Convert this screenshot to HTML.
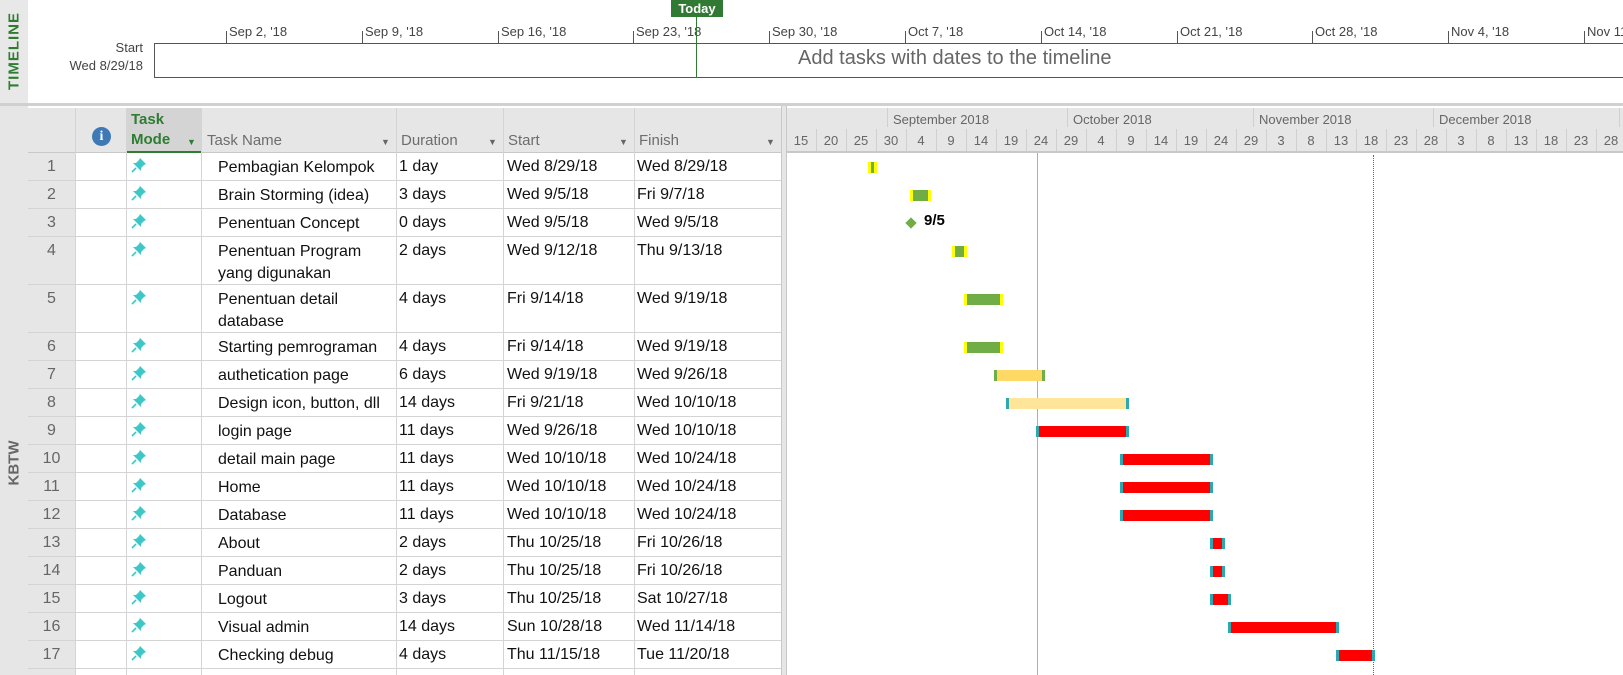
<!DOCTYPE html>
<html style="width:1623px;height:675px;overflow:hidden"><head><meta charset="utf-8"><style>
*{margin:0;padding:0;box-sizing:border-box}
body{width:1623px;height:675px;overflow:hidden;background:#fff;font-family:"Liberation Sans",sans-serif;position:relative}
.a{position:absolute}
.t{position:absolute;white-space:nowrap}
.cell{position:absolute;font-size:16px;color:#111;white-space:nowrap}
</style></head><body>
<!-- timeline -->
<div class="a" style="left:0;top:0;width:28px;height:104px;background:#e8e8e8"></div>
<div class="t" style="left:14px;top:51px;transform:translate(-50%,-50%) rotate(-90deg);color:#2e7d32;font-weight:bold;font-size:15px;letter-spacing:1px">TIMELINE</div>
<div class="t" style="right:1480px;top:40px;font-size:13px;color:#444">Start</div>
<div class="t" style="right:1480px;top:58px;font-size:13px;color:#444">Wed 8/29/18</div>
<div class="a" style="left:154px;top:43px;width:1480px;height:35px;border:1px solid #555"></div>
<div class="t" style="left:798px;top:47px;font-size:20px;color:#666">Add tasks with dates to the timeline</div>
<div id="tl"></div>
<div class="a" style="left:696px;top:17px;width:1px;height:61px;background:#317a34"></div>
<div class="a" style="left:671px;top:0;width:52px;height:17px;background:#317a34;color:#fff;font-weight:bold;font-size:13px;text-align:center;line-height:17px">Today</div>
<div class="a" style="left:0;top:103px;width:1623px;height:3px;background:#d0d0d0"></div>
<!-- left strip -->
<div class="a" style="left:0;top:106px;width:28px;height:569px;background:#e6e6e6"></div>
<div class="t" style="left:14px;top:463px;transform:translate(-50%,-50%) rotate(-90deg);color:#666;font-weight:bold;font-size:15px">KBTW</div>
<div id="wrap" class="a" style="left:0;top:0;width:1623px;height:675px;overflow:hidden">
<!-- table header -->
<div class="a" style="left:28px;top:108px;width:753px;height:45px;background:#e6e6e6;border-bottom:1px solid #c8c8c8"></div>
<div class="a" style="left:126px;top:108px;width:75px;height:45px;background:#d4d4d4;border-bottom:2px solid #2e7d32"></div>
<div class="t" style="left:131px;top:110px;font-size:15px;line-height:20px;color:#2e7d32;font-weight:bold">Task<br>Mode</div>
<div class="t" style="left:187px;top:137px;font-size:9px;color:#2e7d32">▼</div>
<div class="a" style="left:92px;top:127px;width:19px;height:19px;border-radius:50%;background:#3e79b5;color:#fff;font-weight:bold;font-size:14px;text-align:center;line-height:19px;font-family:'Liberation Serif',serif">i</div>
<div class="t" style="left:207px;top:132px;font-size:15px;color:#6d6d6d">Task Name</div>
<div class="t" style="left:401px;top:132px;font-size:15px;color:#6d6d6d">Duration</div>
<div class="t" style="left:508px;top:132px;font-size:15px;color:#6d6d6d">Start</div>
<div class="t" style="left:639px;top:132px;font-size:15px;color:#6d6d6d">Finish</div>
<div class="t" style="left:381px;top:137px;font-size:9px;color:#666">▼</div>
<div class="t" style="left:488px;top:137px;font-size:9px;color:#666">▼</div>
<div class="t" style="left:619px;top:137px;font-size:9px;color:#666">▼</div>
<div class="t" style="left:766px;top:137px;font-size:9px;color:#666">▼</div>
<div id="rows"></div>
<!-- divider -->
<div class="a" style="left:781px;top:106px;width:6px;height:569px;background:#e6e6e6;border-left:1px solid #c8c8c8;border-right:1px solid #c8c8c8"></div>
<!-- gantt header -->
<div class="a" style="left:787px;top:108px;width:836px;height:45px;background:#e6e6e6;border-bottom:2px solid #c8c8c8"></div>
<div id="gh"></div>
<div class="a" style="left:1037px;top:153px;width:1px;height:522px;background:#9ac089"></div>
<div class="a" style="left:1373px;top:155px;width:0;height:520px;border-left:1px dotted #666"></div>
<div id="bars"></div>
</div>
<script>
function h(id,s){document.getElementById(id).innerHTML=s}
var tl='',lab=["Sep 2, '18","Sep 9, '18","Sep 16, '18","Sep 23, '18","Sep 30, '18","Oct 7, '18","Oct 14, '18","Oct 21, '18","Oct 28, '18","Nov 4, '18","Nov 11, '18"];
lab.forEach(function(l,i){var x=Math.round(226+135.8*i);tl+='<div class="a" style="left:'+x+'px;top:31px;width:1px;height:12px;background:#555"></div><div class="t" style="left:'+(x+3)+'px;top:24px;font-size:13px;color:#444">'+l+'</div>'});
h('tl',tl);
var R=[["Pembagian Kelompok","1 day","Wed 8/29/18","Wed 8/29/18"],["Brain Storming (idea)","3 days","Wed 9/5/18","Fri 9/7/18"],["Penentuan Concept","0 days","Wed 9/5/18","Wed 9/5/18"],["Penentuan Program<br>yang digunakan","2 days","Wed 9/12/18","Thu 9/13/18"],["Penentuan detail<br>database","4 days","Fri 9/14/18","Wed 9/19/18"],["Starting pemrograman","4 days","Fri 9/14/18","Wed 9/19/18"],["authetication page","6 days","Wed 9/19/18","Wed 9/26/18"],["Design icon, button, dll","14 days","Fri 9/21/18","Wed 10/10/18"],["login page","11 days","Wed 9/26/18","Wed 10/10/18"],["detail main page","11 days","Wed 10/10/18","Wed 10/24/18"],["Home","11 days","Wed 10/10/18","Wed 10/24/18"],["Database","11 days","Wed 10/10/18","Wed 10/24/18"],["About","2 days","Thu 10/25/18","Fri 10/26/18"],["Panduan","2 days","Thu 10/25/18","Fri 10/26/18"],["Logout","3 days","Thu 10/25/18","Sat 10/27/18"],["Visual admin","14 days","Sun 10/28/18","Wed 11/14/18"],["Checking debug","4 days","Thu 11/15/18","Tue 11/20/18"],["","","",""]];
var pin='<svg width="16" height="16" viewBox="0 0 16 16"><path d="M9 1 L15 7 L13 8 L10 11 L10 14 L2 6 L5 6 L8 3 Z" fill="#3cc8c8"/><path d="M5 11 L1 15" stroke="#3cc8c8" stroke-width="1.6"/></svg>';
var s='',y=153,tops=[];
R.forEach(function(r,i){var hh=(i==3||i==4)?48:28;tops.push(y);
s+='<div class="a" style="left:28px;top:'+y+'px;width:48px;height:'+hh+'px;background:#e6e6e6;border-bottom:1px solid #d4d4d4"></div>';
s+='<div class="a" style="left:75px;top:'+y+'px;width:706px;height:'+hh+'px;border-bottom:1px solid #d4d4d4"></div>';
if(i<17){s+='<div class="cell" style="left:28px;width:47px;text-align:center;top:'+(y+5)+'px;color:#666">'+(i+1)+'</div>';
s+='<div class="a" style="left:131px;top:'+(y+4)+'px">'+pin+'</div>';
s+='<div class="cell" style="left:218px;top:'+(y+4)+'px;line-height:22px">'+r[0]+'</div>';
s+='<div class="cell" style="left:399px;top:'+(y+5)+'px">'+r[1]+'</div>';
s+='<div class="cell" style="left:507px;top:'+(y+5)+'px">'+r[2]+'</div>';
s+='<div class="cell" style="left:637px;top:'+(y+5)+'px">'+r[3]+'</div>';}
y+=hh;});
[75,126,201,396,503,634].forEach(function(x){s+='<div class="a" style="left:'+x+'px;top:108px;width:1px;height:567px;background:#d4d4d4"></div>'});
h('rows',s);
var g='',d=[15,20,25,30,4,9,14,19,24,29,4,9,14,19,24,29,3,8,13,18,23,28,3,8,13,18,23,28];
d.forEach(function(n,i){var x=786+30*i;g+='<div class="t" style="left:'+x+'px;width:30px;text-align:center;top:133px;font-size:13px;color:#666">'+n+'</div>';if(i)g+='<div class="a" style="left:'+x+'px;top:129px;width:1px;height:22px;background:#d0d0d0"></div>'});
[[887,"September 2018"],[1067,"October 2018"],[1253,"November 2018"],[1433,"December 2018"],[1619,""]].forEach(function(m){g+='<div class="a" style="left:'+m[0]+'px;top:108px;width:1px;height:19px;background:#d0d0d0"></div><div class="t" style="left:'+(m[0]+6)+'px;top:112px;font-size:13px;color:#666">'+m[1]+'</div>'});
h('gh',g);
function X(dd){return 785.7+6*dd}
var B=[[0,14,15,'g'],[1,21,24,'g'],[3,28,30,'g'],[4,30,36,'g'],[5,30,36,'g'],[6,35,43,'o'],[7,37,57,'l'],[8,42,57,'r'],[9,56,71,'r'],[10,56,71,'r'],[11,56,71,'r'],[12,71,73,'r'],[13,71,73,'r'],[14,71,74,'r'],[15,74,92,'r'],[16,92,98,'r']];
var b='';
B.forEach(function(q){var l=X(q[1])-2,r=X(q[2])+1.5,t=tops[q[0]]+9,w=r-l;
var cap,fill;if(q[3]=='g'){cap='#ffff00';fill='#70ad47'}else if(q[3]=='o'){cap='#70ad47';fill='#ffd966'}else if(q[3]=='l'){cap='#2ea8b0';fill='#ffe599'}else{cap='#2ea8b0';fill='#ff0000'}
b+='<div class="a" style="left:'+l+'px;top:'+t+'px;width:'+w+'px;height:11px;background:'+fill+';border-left:3px solid '+cap+';border-right:3px solid '+cap+'"></div>'});
var c=X(21);b+='<div class="a" style="left:'+(c-4.5)+'px;top:'+(tops[2]+9.5)+'px;width:8px;height:8px;background:#70ad47;transform:rotate(45deg)"></div>';
b+='<div class="t" style="left:924px;top:'+(tops[2]+3)+'px;font-size:15px;font-weight:bold;color:#000">9/5</div>';
h('bars',b);
</script>
</body></html>
